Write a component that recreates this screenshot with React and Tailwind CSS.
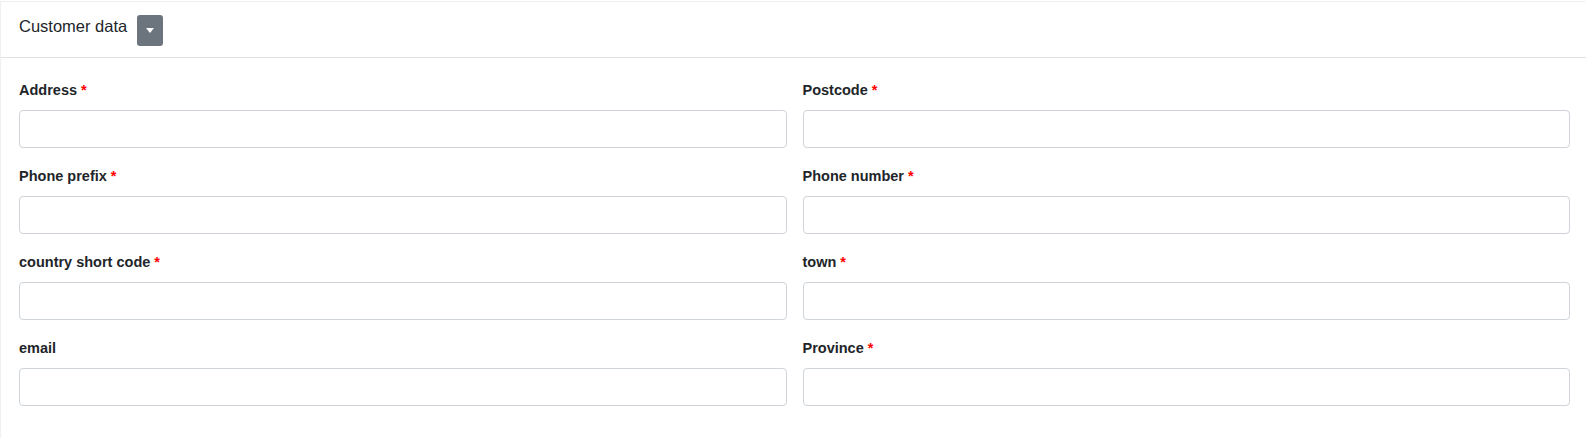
import React from "react";

const fields = [
  ["Address", true],
  ["Postcode", true],
  ["Phone prefix", true],
  ["Phone number", true],
  ["country short code", true],
  ["town", true],
  ["email", false],
  ["Province", true],
];

const Field = ({ label, required }) => (
  <div className="flex flex-col">
    <label className="text-[14.5px] font-bold leading-[21px] text-[#212529] mb-[9px] mt-px">
      {label}
      {required && <span className="text-[#ff0000] ml-[4px]">*</span>}
    </label>
    <input
      type="text"
      className="h-[38px] w-full rounded-[4px] border border-[#ced4da] bg-white px-3 outline-none"
    />
  </div>
);

export default function App() {
  return (
    <div
      className="w-[1586px] h-[438px] bg-white"
      style={{ fontFamily: '"Liberation Sans", Arial, sans-serif' }}
    >
      <div className="border-t border-l border-[#f0f0f0] mt-px h-[437px] flex flex-col">
        <div className="h-[56px] flex items-start pl-[18px] border-b border-[#dee2e6]">
          <span className="text-[16.5px] text-[#212529] mt-[12px] leading-[24px]">
            Customer data
          </span>
          <button className="ml-[10px] mt-[13px] w-[26px] h-[31px] rounded-[3px] bg-[#6c757d] flex items-center justify-center">
            <svg width="8" height="5" viewBox="0 0 8 5">
              <path d="M0 0 L8 0 L4 5 Z" fill="#fff" />
            </svg>
          </button>
        </div>
        <div className="grid grid-cols-2 gap-x-[16px] gap-y-[17px] pl-[18px] pr-[16px] pt-[21px]">
          {fields.map(([label, req]) => (
            <Field key={label} label={label} required={req} />
          ))}
        </div>
      </div>
    </div>
  );
}
